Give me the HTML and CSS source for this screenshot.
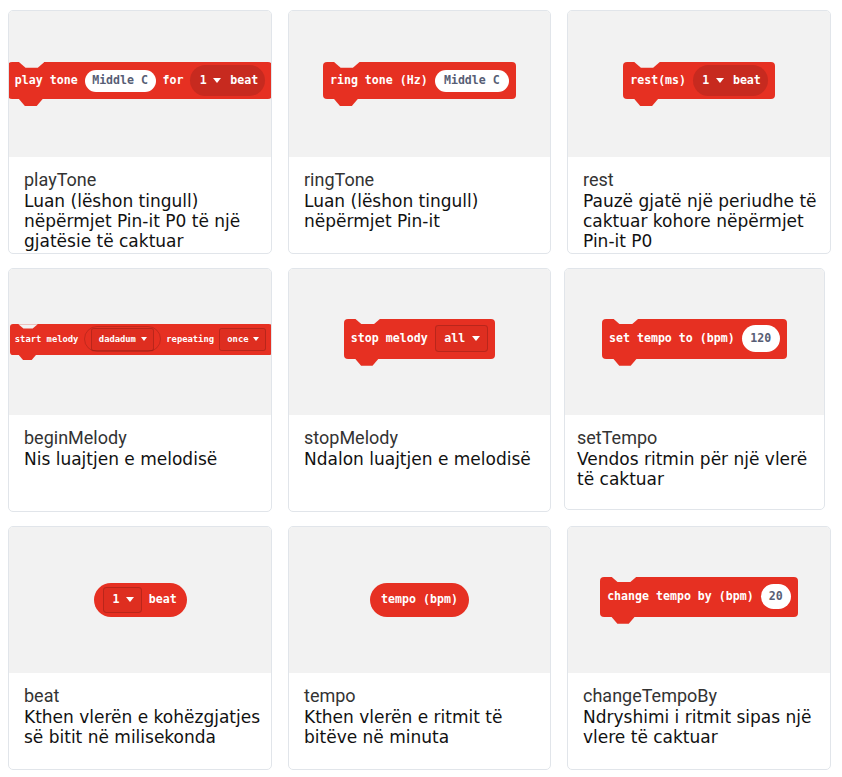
FILE: index.html
```html
<!DOCTYPE html>
<html lang="sq">
<head>
<meta charset="utf-8">
<title>Muzika</title>
<link rel="stylesheet" href="styles.css">
</head>
<body>
<main class="grid">
  <article class="card">
    <div class="card-img">
      <div class="block">
        <span class="lbl">play tone</span>
        <span class="input">Middle C</span>
        <span class="lbl">for</span>
        <span class="nested"><span class="dd-plain">1 <i class="caret"></i></span><span class="lbl">beat</span></span>
      </div>
    </div>
    <div class="card-body">
      <h3 class="title">playTone</h3>
      <p class="desc">Luan (lëshon tingull) nëpërmjet Pin-it P0 të një gjatësie të caktuar</p>
    </div>
  </article>

  <article class="card">
    <div class="card-img">
      <div class="block">
        <span class="lbl">ring tone (Hz)</span>
        <span class="input input--wide">Middle C</span>
      </div>
    </div>
    <div class="card-body">
      <h3 class="title">ringTone</h3>
      <p class="desc">Luan (lëshon tingull) nëpërmjet Pin-it</p>
    </div>
  </article>

  <article class="card">
    <div class="card-img">
      <div class="block">
        <span class="lbl">rest(ms)</span>
        <span class="nested"><span class="dd-plain">1 <i class="caret"></i></span><span class="lbl">beat</span></span>
      </div>
    </div>
    <div class="card-body">
      <h3 class="title">rest</h3>
      <p class="desc">Pauzë gjatë një periudhe të caktuar kohore nëpërmjet Pin-it P0</p>
    </div>
  </article>

  <article class="card">
    <div class="card-img card-img--left">
      <div class="block block--tall block--small">
        <span class="lbl">start melody</span>
        <span class="slot"><span class="dd dd--inner">dadadum <i class="caret"></i></span></span>
        <span class="lbl">repeating</span>
        <span class="dd dd--inner">once <i class="caret"></i></span>
      </div>
    </div>
    <div class="card-body">
      <h3 class="title">beginMelody</h3>
      <p class="desc">Nis luajtjen e melodisë</p>
    </div>
  </article>

  <article class="card">
    <div class="card-img">
      <div class="block block--tall">
        <span class="lbl">stop melody</span>
        <span class="dd">all <i class="caret"></i></span>
      </div>
    </div>
    <div class="card-body">
      <h3 class="title">stopMelody</h3>
      <p class="desc">Ndalon luajtjen e melodisë</p>
    </div>
  </article>

  <article class="card card--shift">
    <div class="card-img">
      <div class="block block--tall">
        <span class="lbl">set tempo to (bpm)</span>
        <span class="input">120</span>
      </div>
    </div>
    <div class="card-body card-body--tight">
      <h3 class="title">setTempo</h3>
      <p class="desc">Vendos ritmin për një vlerë të caktuar</p>
    </div>
  </article>

  <article class="card">
    <div class="card-img">
      <div class="reporter">
        <span class="dd">1 <i class="caret"></i></span>
        <span class="lbl">beat</span>
      </div>
    </div>
    <div class="card-body">
      <h3 class="title">beat</h3>
      <p class="desc">Kthen vlerën e kohëzgjatjes së bitit në milisekonda</p>
    </div>
  </article>

  <article class="card">
    <div class="card-img">
      <div class="reporter reporter--text">
        <span class="lbl">tempo (bpm)</span>
      </div>
    </div>
    <div class="card-body">
      <h3 class="title">tempo</h3>
      <p class="desc">Kthen vlerën e ritmit të bitëve në minuta</p>
    </div>
  </article>

  <article class="card">
    <div class="card-img">
      <div class="block block--tall">
        <span class="lbl">change tempo by (bpm)</span>
        <span class="input input--small">20</span>
      </div>
    </div>
    <div class="card-body">
      <h3 class="title">changeTempoBy</h3>
      <p class="desc">Ndryshimi i ritmit sipas një vlere të caktuar</p>
    </div>
  </article>
</main>
</body>
</html>
```

FILE: styles.css
```css
* { box-sizing: border-box; }

html, body {
  margin: 0;
  padding: 0;
  background: #ffffff;
}

body {
  font-family: "DejaVu Sans", sans-serif;
}

.grid {
  display: grid;
  grid-template-columns: 264px 263px 264px;
  grid-auto-rows: 244px;
  column-gap: 16px;
  row-gap: 14px;
  padding: 10px 0 0 8px;
}

.card {
  display: flex;
  flex-direction: column;
  border: 1px solid #e1e5ea;
  border-radius: 5px;
  overflow: hidden;
  background: #ffffff;
}

.card--shift {
  margin-left: -3px;
  width: 261px;
  height: 242px;
}

.card-img {
  flex: none;
  height: 146px;
  background: #f2f2f2;
  display: flex;
  align-items: center;
  justify-content: center;
  overflow: hidden;
}

.card-img--left {
  justify-content: flex-start;
  padding-left: 1px;
}

.card-body {
  padding: 12px 6px 0 15px;
}

.card-body--tight {
  padding-left: 12px;
}

.title {
  margin: 0;
  font: 400 18px/22px Roboto, "Noto Sans", sans-serif;
  color: #333333;
}

.desc {
  margin: 0;
  font: 400 17px/20px "DejaVu Sans", sans-serif;
  color: #111111;
}

/* ---------- MakeCode style blocks ---------- */

.block {
  position: relative;
  flex: none;
  display: flex;
  align-items: center;
  gap: .6em;
  height: 3.2em;
  padding: 0 .6em;
  margin-bottom: .6em;
  background: #e63022;
  border-radius: .35em;
  color: #ffffff;
  font: 700 11.6px/1 "DejaVu Sans Mono", monospace;
  white-space: nowrap;
}

.block::before {
  content: "";
  position: absolute;
  left: .95em;
  top: 0;
  width: 2.2em;
  height: .5em;
  background: #f2f2f2;
  clip-path: polygon(0 0, 100% 0, 74% 100%, 26% 100%);
}

.block::after {
  content: "";
  position: absolute;
  left: .95em;
  top: 100%;
  width: 2.05em;
  height: .62em;
  background: #e63022;
  clip-path: polygon(0 0, 100% 0, 74% 100%, 26% 100%);
}

.block--tall {
  height: 3.45em;
}

.block--small {
  font-size: 8.8px;
  padding-left: .55em;
  gap: .6em;
}

.lbl {
  display: block;
}

.input {
  display: flex;
  align-items: center;
  height: 1.9em;
  padding: 0 .65em;
  background: #ffffff;
  border-radius: 999px;
  color: #575e75;
}

.input--wide {
  padding: 0 .8em;
}

.block--tall .input {
  height: 2.3em;
  padding: 0 .75em;
}

.block--tall .input--small {
  height: 2.1em;
  padding: 0 .7em;
}

.nested {
  display: flex;
  align-items: center;
  gap: .8em;
  height: 2.75em;
  padding: 0 .6em 0 .8em;
  background: #c72a1f;
  border-radius: 999px;
}

.dd-plain {
  display: flex;
  align-items: center;
  gap: .55em;
}

.dd {
  display: flex;
  align-items: center;
  gap: .6em;
  height: 2.25em;
  padding: 0 .6em 0 .75em;
  border: 1px solid rgba(0, 0, 0, .17);
  border-radius: .3em;
  background: rgba(0, 0, 0, .03);
}

.dd--inner {
  height: 2.6em;
  gap: .55em;
  padding: 0 .7em 0 .8em;
}

.slot {
  display: flex;
  align-items: center;
  height: 2.95em;
  padding: 0 .7em;
  border: 1px solid rgba(0, 0, 0, .16);
  border-radius: 999px;
}

.caret {
  display: block;
  width: 0;
  height: 0;
  border-left: .4em solid transparent;
  border-right: .4em solid transparent;
  border-top: .48em solid #ffffff;
}

.reporter {
  display: flex;
  align-items: center;
  gap: .55em;
  height: 2.85em;
  padding: 0 .85em 0 .8em;
  background: #e63022;
  border-radius: 999px;
  color: #ffffff;
  font: 700 11.6px/1 "DejaVu Sans Mono", monospace;
  white-space: nowrap;
}

.reporter--text {
  padding: 0 1em;
}
```
